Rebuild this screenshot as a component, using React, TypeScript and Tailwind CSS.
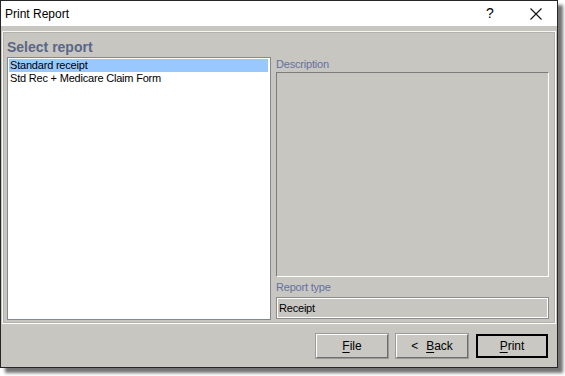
import React from 'react';

const font = { fontFamily: '"Liberation Sans", Arial, sans-serif' };

function DlgButton({ label, hot, rest, isDefault }: { label?: string; hot: string; rest: string; isDefault?: boolean }) {
  return (
    <button
      className={
        'w-[72px] h-[24px] flex items-center justify-center text-[12px] text-black bg-[#cac8c3] ' +
        (isDefault
          ? 'border-2 border-black'
          : 'border border-t-white border-l-white border-r-[#6e6e6e] border-b-[#6e6e6e] outline outline-1 outline-[#9a9a9a]')
      }
    >
      {label && <span className="mr-[8px]">{label}</span>}
      <span className="underline underline-offset-2">{hot}</span>
      <span>{rest}</span>
    </button>
  );
}

export default function PrintReport() {
  return (
    <div className="w-[565px] h-[376px] bg-white" style={font}>
      <div className="w-[558px] h-[368px] border border-[#262626] bg-[#c8c6c1] flex flex-col shadow-[5px_5px_3px_rgba(0,0,0,0.55)]">
        {/* title bar */}
        <div className="h-[25px] bg-white flex items-center">
          <span className="pl-[4px] text-[12px] text-black flex-1">Print Report</span>
          <span className="text-[14px] text-black w-[20px] text-center mr-[30px]">?</span>
          <svg width="12" height="12" viewBox="0 0 12 12" className="mr-[15px]">
            <path d="M0.5 0.5 L11.5 11.5 M11.5 0.5 L0.5 11.5" stroke="#111" strokeWidth="1.1" />
          </svg>
        </div>

        {/* group */}
        <div className="mt-[5px] ml-[1px] mr-[1px] h-[293px] border border-t-[#f6f6f6] border-l-[#f6f6f6] border-r-white border-b-white outline outline-1 outline-[#b4b2ad] -outline-offset-2 flex flex-col pl-[4px] pr-[6px] pt-[7px]">
          <div className="h-[17px] leading-[17px] text-[14px] font-bold text-[#5b6787]">Select report</div>
          <div className="flex gap-[5px] mt-[1px]">
            <div className="w-[264px] h-[263px] bg-white border border-[#828790] p-[1px] text-[11px] tracking-[-0.2px] text-black">
              <div className="h-[13px] leading-[13px] bg-[#99c8ff] pl-[1px] mr-[1px]">Standard receipt</div>
              <div className="h-[13px] leading-[13px] pl-[1px]">Std Rec + Medicare Claim Form</div>
            </div>
            <div className="w-[273px] flex flex-col text-[11px] tracking-[-0.2px]">
              <div className="h-[15px] leading-[14px] text-[#6371a0]">Description</div>
              <div className="h-[205px] border border-t-[#7c7c7c] border-l-[#7c7c7c] border-b-white border-r-white" />
              <div className="h-[20px] leading-[18px] text-[#6371a0] pt-[1px]">Report type</div>
              <div className="h-[22px] border border-[#8c8c8c] outline outline-1 outline-white -outline-offset-2 flex items-center pl-[2px] text-black">
                Receipt
              </div>
            </div>
          </div>
        </div>

        {/* buttons */}
        <div className="flex-1 flex justify-end items-start gap-[8px] pt-[10px] pr-[9px] bg-[#c8c6c0]">
          <DlgButton hot="F" rest="ile" />
          <DlgButton label="<" hot="B" rest="ack" />
          <DlgButton hot="P" rest="rint" isDefault />
        </div>
      </div>
    </div>
  );
}
